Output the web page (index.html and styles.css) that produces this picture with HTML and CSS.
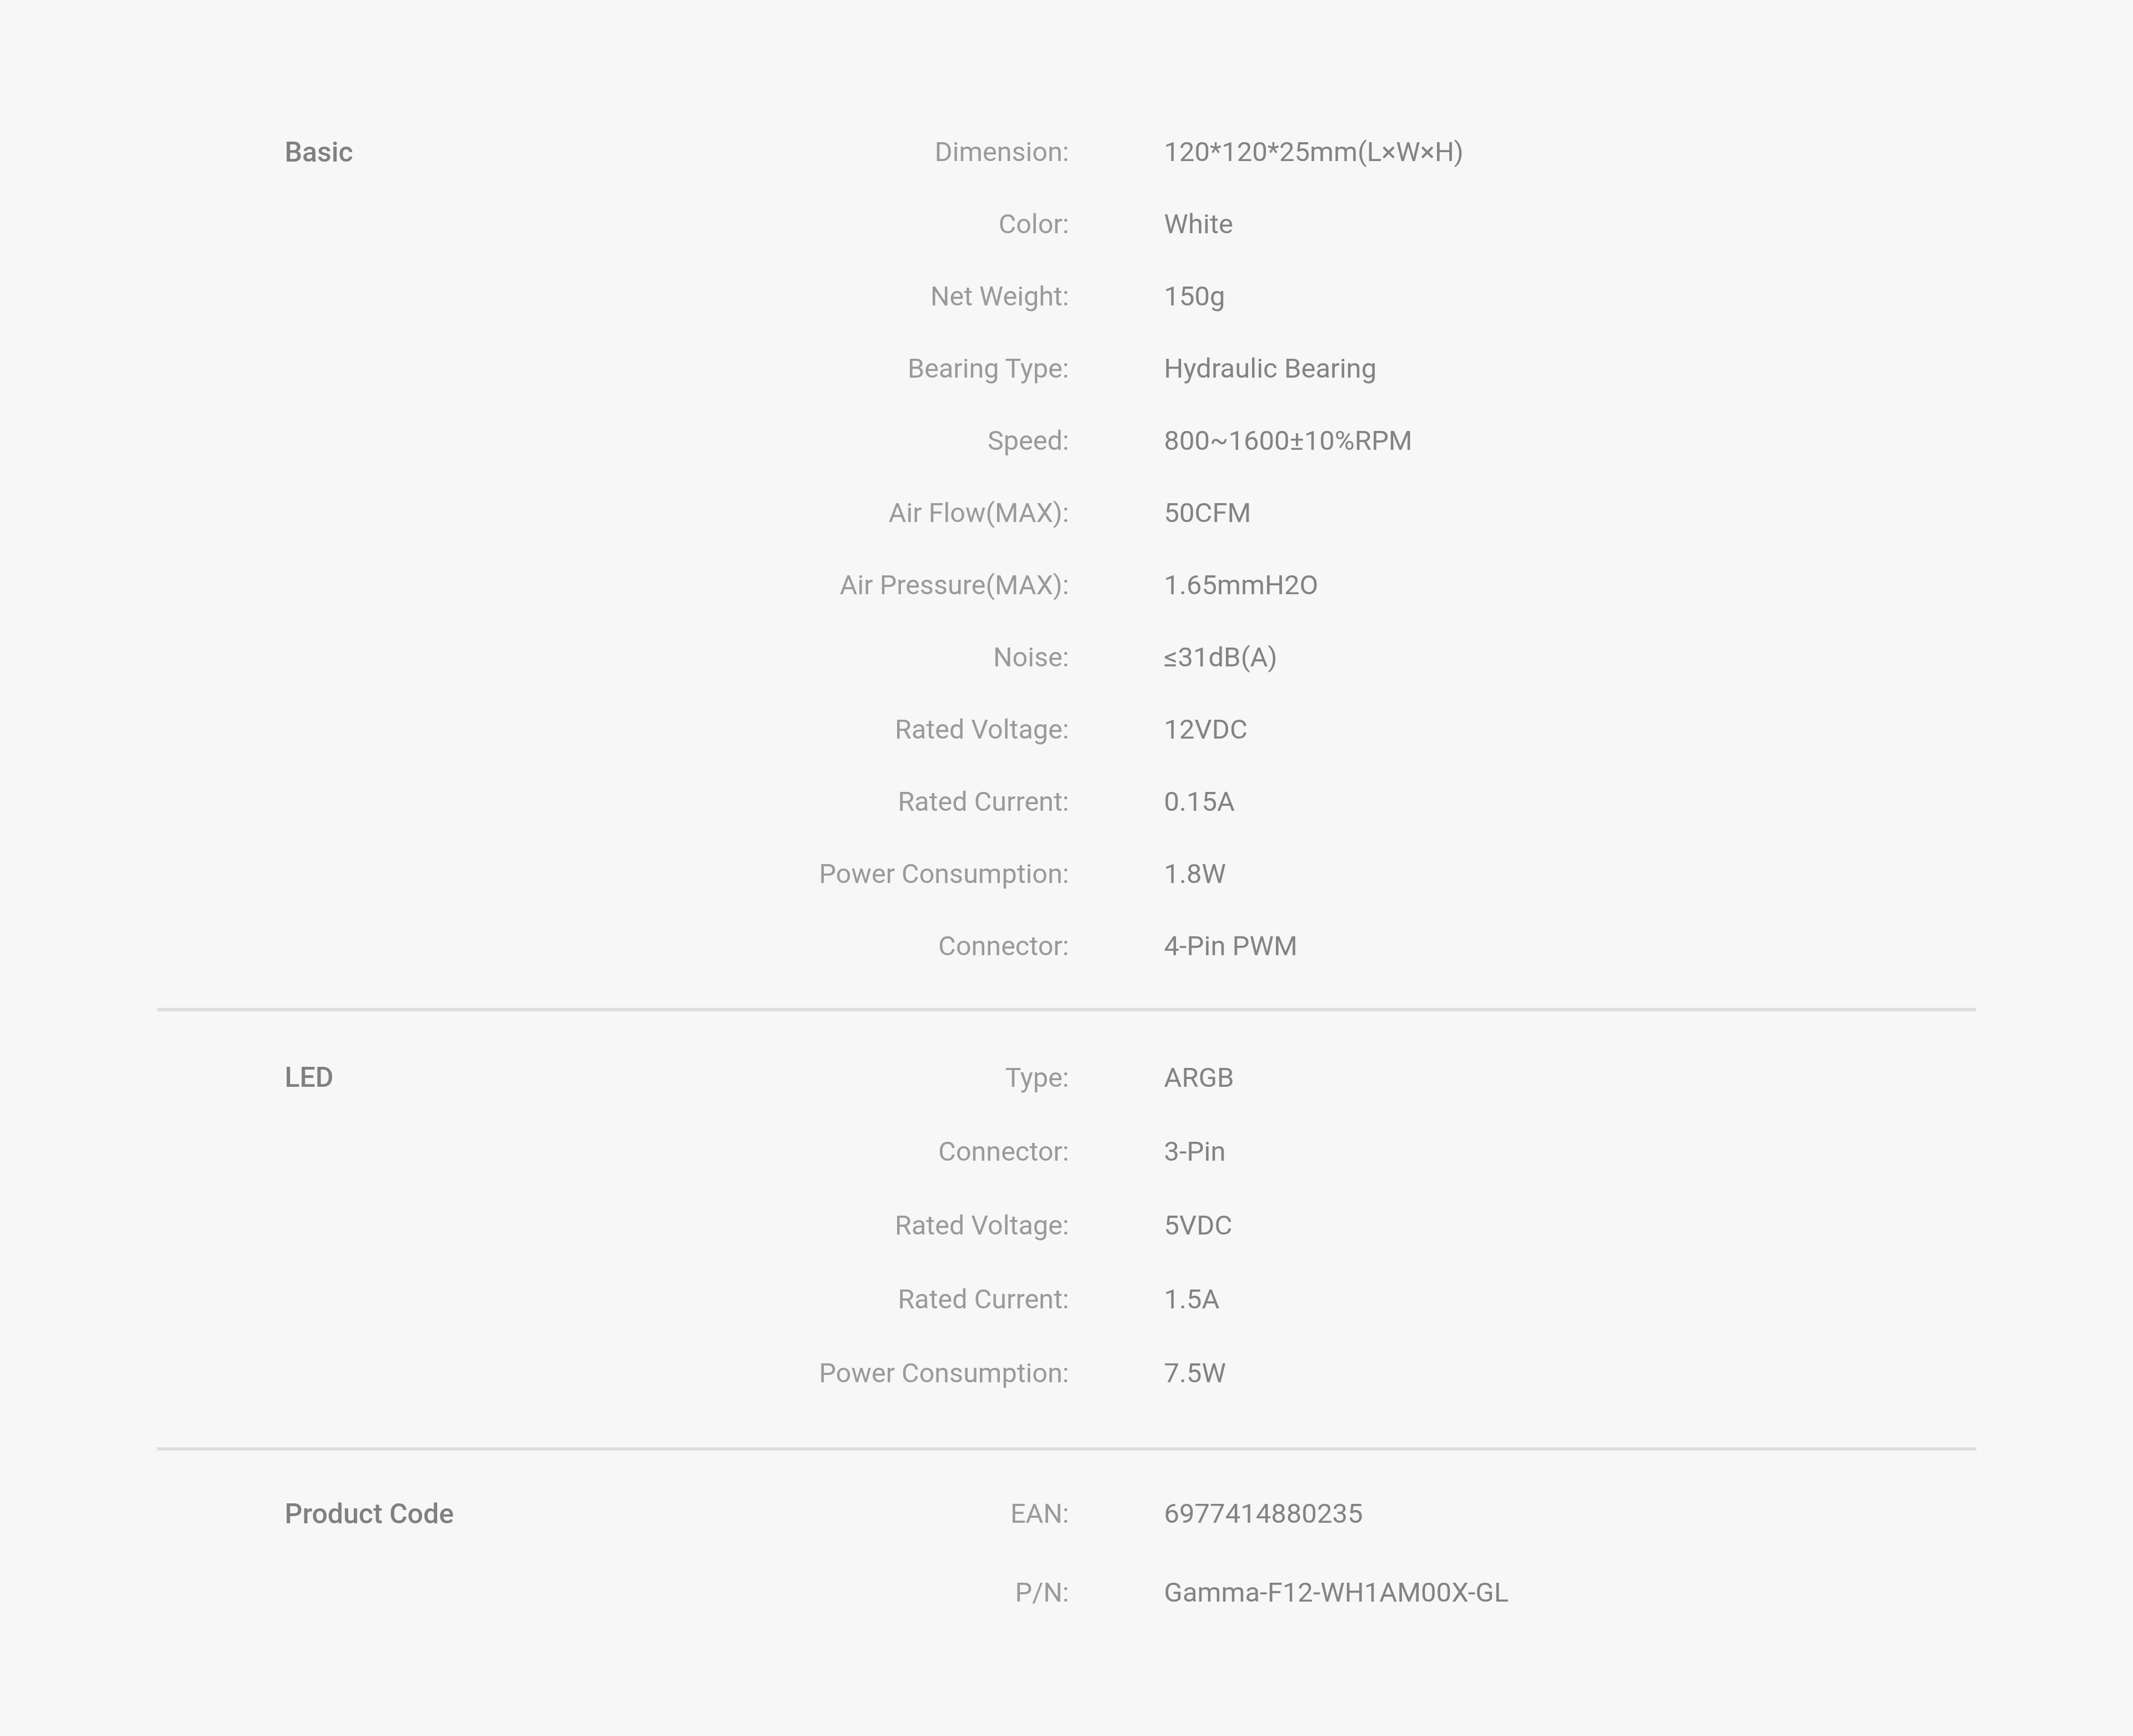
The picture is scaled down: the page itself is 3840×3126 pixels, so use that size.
FILE: index.html
```html
<!DOCTYPE html>
<html lang="en">
<head>
<meta charset="utf-8">
<title>Specifications</title>
<link rel="stylesheet" href="styles.css">
</head>
<body>
<main class="specs">
  <section class="section section--basic">
    <h2 class="title">Basic</h2>
    <dl class="rows">
      <div class="row"><dt>Dimension:</dt><dd>120*120*25mm(L×W×H)</dd></div>
      <div class="row"><dt>Color:</dt><dd>White</dd></div>
      <div class="row"><dt>Net Weight:</dt><dd>150g</dd></div>
      <div class="row"><dt>Bearing Type:</dt><dd>Hydraulic Bearing</dd></div>
      <div class="row"><dt>Speed:</dt><dd>800~1600±10%RPM</dd></div>
      <div class="row"><dt>Air Flow(MAX):</dt><dd>50CFM</dd></div>
      <div class="row"><dt>Air Pressure(MAX):</dt><dd>1.65mmH2O</dd></div>
      <div class="row"><dt>Noise:</dt><dd>≤31dB(A)</dd></div>
      <div class="row"><dt>Rated Voltage:</dt><dd>12VDC</dd></div>
      <div class="row"><dt>Rated Current:</dt><dd>0.15A</dd></div>
      <div class="row"><dt>Power Consumption:</dt><dd>1.8W</dd></div>
      <div class="row"><dt>Connector:</dt><dd>4-Pin PWM</dd></div>
    </dl>
  </section>
  <section class="section section--led">
    <h2 class="title">LED</h2>
    <dl class="rows">
      <div class="row"><dt>Type:</dt><dd>ARGB</dd></div>
      <div class="row"><dt>Connector:</dt><dd>3-Pin</dd></div>
      <div class="row"><dt>Rated Voltage:</dt><dd>5VDC</dd></div>
      <div class="row"><dt>Rated Current:</dt><dd>1.5A</dd></div>
      <div class="row"><dt>Power Consumption:</dt><dd>7.5W</dd></div>
    </dl>
  </section>
  <section class="section section--code">
    <h2 class="title">Product Code</h2>
    <dl class="rows">
      <div class="row"><dt>EAN:</dt><dd>6977414880235</dd></div>
      <div class="row"><dt>P/N:</dt><dd>Gamma-F12-WH1AM00X-GL</dd></div>
    </dl>
  </section>
</main>
</body>
</html>
```

FILE: styles.css
```css
html, body {
  margin: 0;
  padding: 0;
  background: #f7f7f7;
}

body {
  font-family: Roboto, "Liberation Sans", Arial, sans-serif;
  min-height: 3126px;
}

.specs {
  width: 3275px;
  margin: 0 auto;
  padding-top: 209px;
}

.section {
  display: flex;
  align-items: flex-start;
  padding-left: 230px;
  border-bottom: 6px solid #dedede;
}

.section--basic {
  padding-bottom: 46px;
  --row-h: 130px;
}

.section--led {
  padding-top: 53px;
  padding-bottom: 67px;
  --row-h: 133px;
}

.section--code {
  padding-top: 43px;
  border-bottom: none;
  --row-h: 142px;
}

.title {
  margin: 0;
  width: 700px;
  flex: none;
  font-size: 50px;
  font-weight: 500;
  color: #808080;
  line-height: var(--row-h);
}

.rows {
  margin: 0;
  flex: 1;
}

.row {
  display: grid;
  grid-template-columns: 712px 1fr;
  column-gap: 171px;
  line-height: var(--row-h);
}

.row dt {
  text-align: right;
  font-size: 48.5px;
  color: #9a9a9a;
  white-space: nowrap;
}

.row dd {
  margin: 0;
  font-size: 49px;
  color: #838383;
  white-space: nowrap;
}
```
